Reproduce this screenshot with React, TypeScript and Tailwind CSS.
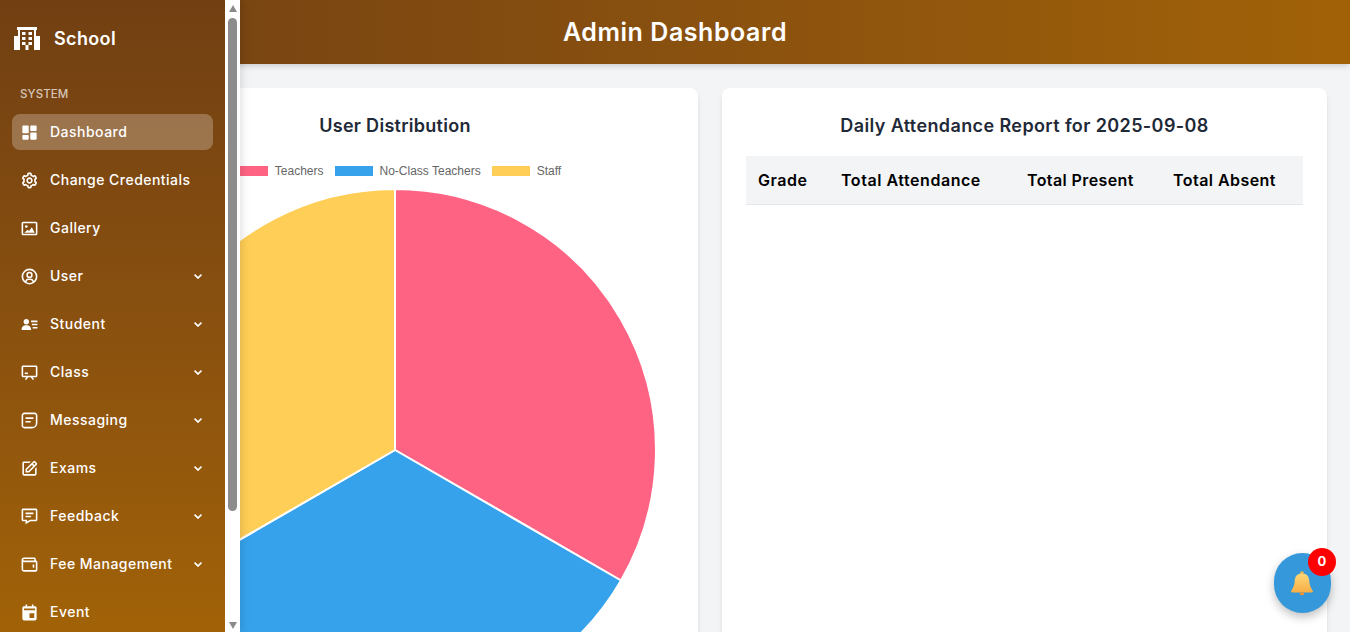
import type { IconType } from 'react-icons';
import {
  BiChalkboard,
  BiChevronDown,
  BiCog,
  BiEdit,
  BiMessageDetail,
  BiSolidCalendarEvent,
  BiSolidDashboard,
  BiSolidUserDetail,
  BiUserCircle,
  BiWallet,
} from 'react-icons/bi';

type NavItem = { label: string; icon: IconType; sub?: boolean; active?: boolean };

const MessagingIcon: IconType = ({ className }) => (
  <svg className={className} viewBox="0 0 24 24" fill="none" stroke="currentColor">
    <path d="M5.500 3h13a2.500 2.500 0 0 1 2.500 2.500v9.500c0 3.500-2.500 6-6 6H5.500A2.500 2.500 0 0 1 3 18.500v-13A2.500 2.500 0 0 1 5.500 3z" strokeWidth="2" />
    <path d="M7 9h10M7 13.500h6.500" strokeWidth="2" />
  </svg>
);

const GalleryIcon: IconType = ({ className }) => (
  <svg className={className} viewBox="0 0 24 24" fill="none">
    <rect x="3" y="4.500" width="18" height="15" rx="1" stroke="currentColor" strokeWidth="2" />
    <circle cx="8" cy="9.500" r="1.700" fill="currentColor" />
    <path d="M5.500 17.500l4-4 2 1.500 3.500-4.500 3.500 7z" fill="currentColor" />
  </svg>
);

const navItems: NavItem[] = [
  { label: 'Dashboard', icon: BiSolidDashboard, active: true },
  { label: 'Change Credentials', icon: BiCog },
  { label: 'Gallery', icon: GalleryIcon },
  { label: 'User', icon: BiUserCircle, sub: true },
  { label: 'Student', icon: BiSolidUserDetail, sub: true },
  { label: 'Class', icon: BiChalkboard, sub: true },
  { label: 'Messaging', icon: MessagingIcon, sub: true },
  { label: 'Exams', icon: BiEdit, sub: true },
  { label: 'Feedback', icon: BiMessageDetail, sub: true },
  { label: 'Fee Management', icon: BiWallet, sub: true },
  { label: 'Event', icon: BiSolidCalendarEvent },
];

const legend = [
  { label: 'Teachers', color: 'bg-[#ff6384]' },
  { label: 'No-Class Teachers', color: 'bg-[#36a2eb]' },
  { label: 'Staff', color: 'bg-[#ffce56]' },
];

function SchoolLogo() {
  return (
    <svg className="shrink-0" width="26" height="23" viewBox="0 0 26 23">
      <path fill="#fff" d="M3 0h20v3h-1v6h4v14H0V9h4V3H3z" />
      <path fill="#734110" d="M6 3h14v20H6z" />
      <path
        fill="#fff"
        d="M8 5h3.500v3H8z M14.500 5H18v3h-3.500z M8 10h3.500v3H8z M14.500 10H18v3h-3.500z M8 15h3.500v3H8z M14.500 15H18v3h-3.500z M11.500 18h3v5h-3z"
      />
    </svg>
  );
}

function Sidebar() {
  return (
    <aside className="absolute left-0 top-0 z-20 flex h-[632px] w-[240px] shadow-[2px_0_8px_rgba(0,0,0,0.12)]">
      <div className="flex w-[225px] flex-col overflow-hidden bg-gradient-to-b from-[#713f12] to-[#a16207] text-white">
        <div className="flex h-[76px] shrink-0 items-center gap-[14px] pl-[14px] pt-[1px]">
          <SchoolLogo />
          <span className="text-[18px] font-semibold tracking-[0.35px]">School</span>
        </div>
        <div className="mt-[11px] pl-5 text-[11.5px] leading-[14px] font-medium tracking-[0.1px] text-white/70">SYSTEM</div>
        <nav className="mt-[13px] flex flex-col gap-3 px-3">
          {navItems.map(({ label, icon: Icon, sub, active }) => (
            <div
              key={label}
              className={`flex h-9 shrink-0 items-center rounded-lg pl-[7.5px] pr-2 ${active ? 'bg-white/25' : ''}`}
            >
              <Icon className="size-[19px] shrink-0" />
              <span className="mb-[2px] ml-[11.5px] text-[14px] font-medium tracking-[0.48px]">{label}</span>
              {sub && <BiChevronDown className="ml-auto -mr-[1px] size-[16px]" stroke="currentColor" strokeWidth="0.6" />}
            </div>
          ))}
        </nav>
      </div>
      <div className="flex w-[15px] flex-col items-center bg-white">
        <div className="mt-[5px] size-0 border-x-[4.5px] border-b-[7px] border-x-transparent border-b-[#8a8a8a]" />
        <div className="mt-[6px] h-[493px] w-[9px] rounded-full bg-[#8c8c8c]" />
        <div className="mt-auto mb-[3px] size-0 border-x-[4.5px] border-t-[7px] border-x-transparent border-t-[#8a8a8a]" />
      </div>
    </aside>
  );
}

function PieChart() {
  return (
    <svg className="ml-[37px] mt-[7px] block shrink-0" width="530" height="530" viewBox="-265 -265 530 530">
      <g stroke="#fff" strokeWidth="2">
        <path d="M0 0 L0 -261 A261 261 0 0 1 226 130.5 Z" fill="#ff6384" />
        <path d="M0 0 L226 130.5 A261 261 0 0 1 -226 130.5 Z" fill="#36a2eb" />
        <path d="M0 0 L-226 130.5 A261 261 0 0 1 0 -261 Z" fill="#ffce56" />
      </g>
    </svg>
  );
}

function NotificationBell() {
  return (
    <div className="absolute bottom-[19px] right-[19px] z-30 flex h-[60px] w-[57px] items-center justify-center rounded-full bg-[#3498db] shadow-[0_4px_10px_rgba(0,0,0,0.25)]">
      <svg className="-ml-[1px]" width="24" height="25" viewBox="0 0 24 25">
        <defs>
          <linearGradient id="bell" x1="0" y1="0" x2="0" y2="1">
            <stop offset="0" stopColor="#ffd877" />
            <stop offset="1" stopColor="#f7ad45" />
          </linearGradient>
        </defs>
        <circle cx="12" cy="2" r="1.800" fill="#f8b64c" />
        <path
          d="M12 2.500C6.800 2.500 4.900 6 4.700 10c-.2 4-1.500 7-3.300 9.500-.8 1.100-.4 2 .8 2h19.600c1.200 0 1.600-.9.800-2-1.800-2.500-3.100-5.500-3.300-9.500-.2-4-2.100-7.500-7.300-7.500z"
          fill="url(#bell)"
        />
        <ellipse cx="12" cy="22.800" rx="2.200" ry="1.500" fill="#ee9433" />
      </svg>
      <span className="absolute -right-[5px] -top-[5px] flex size-7 items-center justify-center rounded-full bg-[#ff0000] text-[13px] font-bold text-white">
        0
      </span>
    </div>
  );
}

export default function App() {
  return (
    <div className="relative flex h-[632px] w-[1350px] flex-col overflow-hidden bg-[#f3f4f6] font-['Inter','Liberation_Sans',sans-serif]">
      <Sidebar />
      <header className="relative z-10 flex h-16 shrink-0 items-center justify-center bg-gradient-to-r from-[#713f12] to-[#a16207] pt-[1px] shadow-md">
        <h1 className="text-[25px] font-semibold tracking-[0.55px] text-white">Admin Dashboard</h1>
      </header>
      <main className="grid min-h-0 flex-1 grid-cols-2 gap-6 pl-[93px] pr-[23px] pt-6">
        <section className="flex h-[620px] flex-col overflow-hidden rounded-lg bg-white shadow-md">
          <h2 className="mt-[25px] -ml-[1px] text-center text-[18px] leading-[26px] font-semibold tracking-[0.28px] text-[#1f2937]">User Distribution</h2>
          <div className="mt-[25px] flex items-center justify-center gap-[11px] font-['Liberation_Sans',sans-serif] text-[12px] leading-[14px] text-[#666]">
            {legend.map((item) => (
              <div key={item.label} className="flex items-center gap-[7px]">
                <span className={`h-[10px] w-[38px] ${item.color}`} />
                {item.label}
              </div>
            ))}
          </div>
          <PieChart />
        </section>
        <section className="h-[620px] rounded-lg bg-white px-6 shadow-md">
          <h2 className="mt-[25px] text-center text-[18px] leading-[26px] font-semibold tracking-[0.39px] text-[#1f2937]">Daily Attendance Report for 2025-09-08</h2>
          <table className="mt-[17px] w-full table-fixed border-collapse text-left text-[16px] tracking-[0.55px] text-black">
            <thead>
              <tr className="h-[48px] border-b border-[#e5e7eb] bg-[#f3f4f6]">
                <th className="w-[83px] pl-3 font-semibold">Grade</th>
                <th className="w-[186px] pl-3 font-semibold">Total Attendance</th>
                <th className="w-[146px] pl-3 font-semibold tracking-[0.4px]">Total Present</th>
                <th className="pl-3 font-semibold tracking-[0.45px]">Total Absent</th>
              </tr>
            </thead>
          </table>
        </section>
      </main>
      <NotificationBell />
    </div>
  );
}
